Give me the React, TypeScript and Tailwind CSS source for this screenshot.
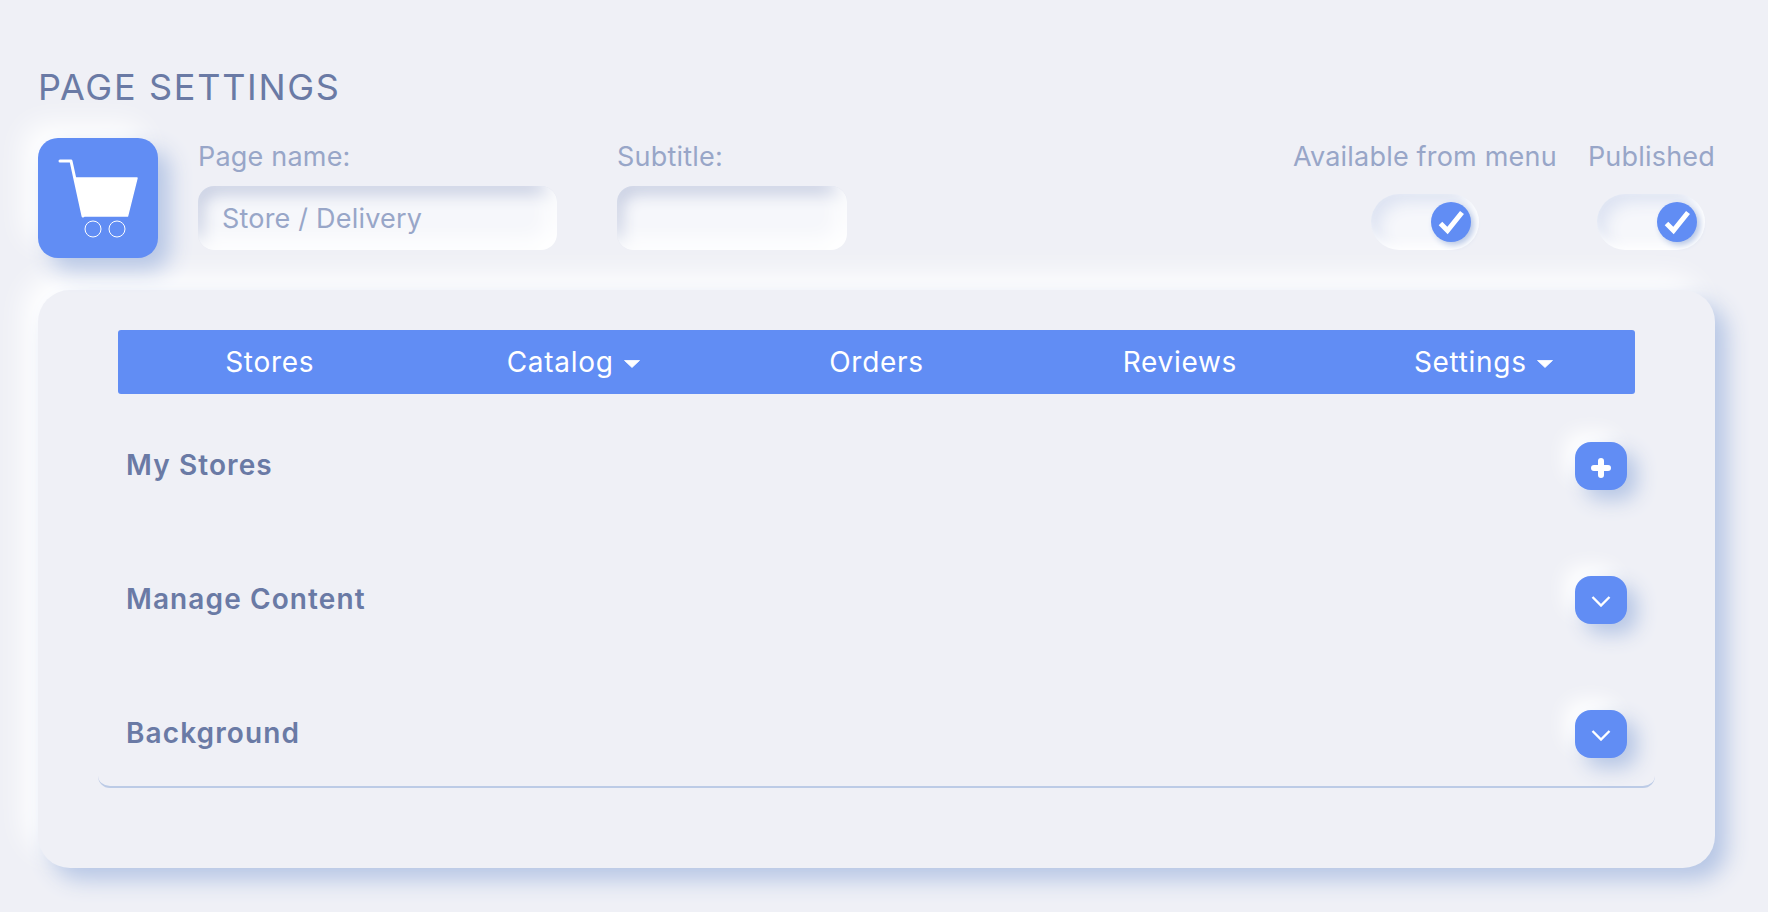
const raised = "shadow-[12px_12px_22px_#b6c6e5,-14px_-14px_28px_#ffffff]";

function Caret() {
  return (
    <svg width="16" height="8" viewBox="0 0 16 8" className="ml-[10px] mt-1" fill="#fff">
      <path d="M0.5 0.5h15L8 7.5z" stroke="#fff" strokeWidth="0.8" strokeLinejoin="round" />
    </svg>
  );
}

function Toggle() {
  return (
    <div className="mt-6 flex h-14 w-[108px] items-center justify-end rounded-[28px] bg-[#f6f7fb] pr-2 shadow-[inset_-6px_-6px_12px_#ffffff,inset_8px_8px_16px_#dde3f2]">
      <div className="flex h-10 w-10 items-center justify-center rounded-full bg-[#618df4] shadow-[3px_3px_6px_#b6c6e5]">
        <svg width="40" height="40" viewBox="0 0 40 40" fill="none">
          <path d="M9.500 21.500l7 7L31 10.500" stroke="#fff" strokeWidth="5" />
        </svg>
      </div>
    </div>
  );
}

function Field({ label, value, width }: { label: string; value?: string; width: string }) {
  return (
    <div className={width}>
      <div className="h-7 pt-[1px] text-[27px] leading-7 tracking-[0.2px] text-[#98a6c8]">{label}</div>
      <div className="mt-4 flex h-16 items-center rounded-2xl bg-[#f6f7fb] pl-6 pt-[2px] text-[27px] tracking-[0.2px] text-[#98a6c8] shadow-[inset_-10px_-10px_20px_#ffffff,inset_5px_8px_16px_#c6cde1]">
        {value}
      </div>
    </div>
  );
}

function Row({ title, icon }: { title: string; icon: "plus" | "down" }) {
  return (
    <div className="flex h-12 items-center justify-between">
      <span className="pb-[2px] text-[28px] font-semibold tracking-[1.1px] text-[#6a7aa5]">{title}</span>
      <button
        type="button"
        className="flex h-12 w-[52px] items-center justify-center rounded-2xl bg-[#618df4] shadow-[10px_10px_20px_#b6c6e5,-10px_-10px_20px_#ffffff]"
      >
        {icon === "plus" ? (
          <svg width="24" height="24" viewBox="0 0 24 24" fill="none" className="mt-[3px]">
            <path d="M12 5v14M5 12h14" stroke="#fff" strokeWidth="6" strokeLinecap="round" />
          </svg>
        ) : (
          <svg width="20" height="12" viewBox="0 0 20 12" fill="none" className="mt-[2px]">
            <path d="M1.500 2l8.500 8.500L18.500 2" stroke="#fff" strokeWidth="2.400" />
          </svg>
        )}
      </button>
    </div>
  );
}

export default function App() {
  return (
    <div className="min-h-screen overflow-hidden bg-[#eff0f6] pl-[38px] pr-[53px] pt-[67px] font-['Inter',sans-serif]">
      <h1 className="mb-[31px] h-10 text-[36px] leading-10 tracking-[1.7px] text-[#6a7aa5]">PAGE SETTINGS</h1>

      <div className="mb-8 flex h-[120px]">
        <div className={`h-[120px] w-[120px] shrink-0 rounded-[20px] bg-[#618df4] ${raised}`}>
          <svg width="120" height="120" viewBox="0 0 120 120" fill="none">
            <path d="M22 23h11l12 55" stroke="#fff" strokeWidth="3" strokeLinecap="round" strokeLinejoin="round" />
            <path d="M37 40h62l-9.500 38H45z" fill="#fff" stroke="#fff" strokeWidth="1.500" strokeLinejoin="round" />
            <circle cx="55" cy="91" r="8" stroke="#fff" strokeWidth="1" />
            <circle cx="79" cy="91" r="8" stroke="#fff" strokeWidth="1" />
          </svg>
        </div>
        <div className="ml-10 flex pt-1">
          <Field label="Page name:" value="Store / Delivery" width="w-[359px]" />
          <div className="w-[60px]" />
          <Field label="Subtitle:" width="w-[230px]" />
        </div>
        <div className="ml-auto flex gap-[31px] pt-1">
          <div className="flex flex-col items-center">
            <div className="h-7 pt-[1px] text-[27px] leading-7 tracking-[0.2px] text-[#98a6c8]">Available from menu</div>
            <Toggle />
          </div>
          <div className="flex flex-col items-center">
            <div className="h-7 pt-[1px] text-[27px] leading-7 tracking-[0.2px] text-[#98a6c8]">Published</div>
            <Toggle />
          </div>
        </div>
      </div>

      <div className={`h-[578px] rounded-[32px] bg-[#eff0f6] px-[60px] pt-10 ${raised}`}>
        <div className="rounded-xl border-b-2 border-[#bccbe6] px-5 pb-7">
          <nav className="grid h-16 grid-cols-5 rounded-[3px] bg-[#618df4] text-[28px] tracking-[0.7px] text-white">
            <div className="flex items-center justify-center">Stores</div>
            <div className="flex items-center justify-center">Catalog<Caret /></div>
            <div className="flex items-center justify-center">Orders</div>
            <div className="flex items-center justify-center">Reviews</div>
            <div className="flex items-center justify-center">Settings<Caret /></div>
          </nav>
          <div className="mt-12 flex flex-col gap-[86px] px-2">
            <Row title="My Stores" icon="plus" />
            <Row title="Manage Content" icon="down" />
            <Row title="Background" icon="down" />
          </div>
        </div>
      </div>
    </div>
  );
}
